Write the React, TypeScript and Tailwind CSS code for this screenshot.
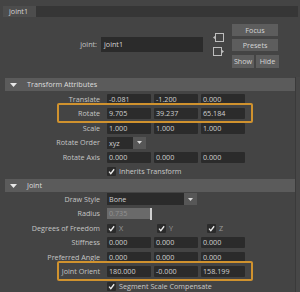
import React from "react";

function Field({ v, w = "w-[44px]" }: { v: string; w?: string }) {
  return (
    <div className={`${w} h-[11px] bg-[#2b2b2b] pl-[2px] leading-[11px] text-[#cfcfcf] rounded-[1px]`}>{v}</div>
  );
}

function Check({ label, dim }: { label?: string; dim?: boolean }) {
  return (
    <div className="flex items-center gap-[3px]">
      <div className="w-[9px] h-[9px] bg-[#2b2b2b] flex items-center justify-center rounded-[1px]">
        <svg width="7" height="7" viewBox="0 0 10 10">
          <path d="M1.5 5.2 L4 8 L8.8 1.8" stroke="#ececec" strokeWidth="1.9" fill="none" />
        </svg>
      </div>
      {label && <span className={dim ? "text-[#9a9a9a]" : "text-[#c8c8c8]"}>{label}</span>}
    </div>
  );
}

function Row({ label, children, highlight }: { label?: string; children?: React.ReactNode; highlight?: boolean }) {
  return (
    <div className="relative flex h-[14.5px] items-center">
      <div className="w-[95px] text-right text-[#c4c4c4] leading-[11px]">{label}</div>
      <div className="ml-[7px] flex items-center gap-[3px]">{children}</div>
      {highlight && (
        <div className="absolute left-[52px] w-[196px] top-[-3.5px] h-[20px] border-2 border-[#d0922e] rounded-[2px]" />
      )}
    </div>
  );
}

function Header({ title }: { title: string }) {
  return (
    <div className="flex h-[13px] items-center bg-[#5b5b5b] text-[#dedede]">
      <svg width="7" height="4" viewBox="0 0 7 4" className="ml-[5px]">
        <path d="M0 0 H7 L3.5 4 Z" fill="#e8e8e8" />
      </svg>
      <span className="ml-[10px] leading-[11px]">{title}</span>
    </div>
  );
}

function Dropdown({ v, w }: { v: string; w: string }) {
  return (
    <div className={`${w} h-[12px] flex`}>
      <div className="flex-1 bg-[#2b2b2b] pl-[2px] leading-[12px] text-[#cfcfcf]">{v}</div>
      <div className="w-[13px] bg-[#575757] flex items-center justify-center">
        <svg width="5" height="3" viewBox="0 0 5 3">
          <path d="M0 0 H5 L2.5 3 Z" fill="#d8d8d8" />
        </svg>
      </div>
    </div>
  );
}

function Btn({ t, w, h }: { t: string; w: string; h: string }) {
  return (
    <div className={`${w} ${h} bg-[#5d5d5d] text-[#d6d6d6] flex items-center justify-center`}>{t}</div>
  );
}

export default function App() {
  return (
    <div className="w-[300px] h-[292px] bg-[#444444] overflow-hidden font-['Open_Sans',sans-serif] text-[7.2px]">
      {/* tab bar */}
      <div className="pt-[6px] pl-[3px] pr-[2px]">
        <div className="flex h-[11px] bg-[#363636]">
          <div className="w-[33px] bg-[#4d4d4d] pl-[6px] leading-[11px] text-[#d4d4d4]">joint1</div>
        </div>
      </div>
      {/* node header */}
      <div className="flex h-[60px]">
        <div className="flex items-center mt-[20px] h-[15px] self-start">
          <div className="w-[97px] text-right text-[#c4c4c4]">joint:</div>
          <div className="ml-[4px] w-[102px] h-[15px] bg-[#2b2b2b] pl-[3px] leading-[15px] text-[#d4d4d4]">joint1</div>
        </div>
        <div className="ml-[10px] mt-[16px] flex flex-col gap-[5px] self-start">
          <svg width="11" height="9" viewBox="0 0 11 9">
            <rect x="2.5" y="0.5" width="8" height="8" fill="none" stroke="#bdbdbd" strokeWidth="1" />
            <path d="M0 4.5 L2.5 2.5 V6.5 Z" fill="#bdbdbd" />
          </svg>
          <svg width="11" height="9" viewBox="0 0 11 9">
            <rect x="0.5" y="0.5" width="8" height="8" fill="none" stroke="#bdbdbd" strokeWidth="1" />
            <path d="M11 4.5 L8.5 2.5 V6.5 Z" fill="#bdbdbd" />
          </svg>
        </div>
        <div className="ml-[8px] mt-[7px] flex flex-col gap-[3px] self-start">
          <Btn t="Focus" w="w-[46px]" h="h-[12px]" />
          <Btn t="Presets" w="w-[46px]" h="h-[12px]" />
          <div className="flex gap-[2px] mt-[1px]">
            <Btn t="Show" w="w-[22px]" h="h-[13px]" />
            <Btn t="Hide" w="w-[23px]" h="h-[13px]" />
          </div>
        </div>
      </div>
      {/* attribute area */}
      <div className="flex">
        <div className="ml-[5px] w-[290px] pt-[1px]">
          <Header title="Transform Attributes" />
          <div className="h-[1px]" />
          <Row label="Translate">
            <Field v="-0.081" />
            <Field v="-1.200" />
            <Field v="0.000" />
          </Row>
          <Row label="Rotate" highlight>
            <Field v="9.705" />
            <Field v="39.237" />
            <Field v="65.184" />
          </Row>
          <Row label="Scale">
            <Field v="1.000" />
            <Field v="1.000" />
            <Field v="1.000" />
          </Row>
          <Row label="Rotate Order">
            <Dropdown v="xyz" w="w-[39px]" />
          </Row>
          <Row label="Rotate Axis">
            <Field v="0.000" />
            <Field v="0.000" />
            <Field v="0.000" />
          </Row>
          <Row>
            <Check label="Inherits Transform" />
          </Row>
          <Header title="Joint" />
          <Row label="Draw Style">
            <Dropdown v="Bone" w="w-[90px]" />
          </Row>
          <Row label="Radius">
            <div className="w-[43px] h-[11px] bg-[#6a6a6a] pl-[2px] leading-[11px] text-[#929292]">0.735</div>
            <div className="-ml-[3px] w-[2px] h-[12px] bg-[#cfcfcf]" />
          </Row>
          <Row label="Degrees of Freedom">
            <div className="w-[47px]"><Check label="X" dim /></div>
            <div className="w-[47px]"><Check label="Y" dim /></div>
            <Check label="Z" dim />
          </Row>
          <Row label="Stiffness">
            <Field v="0.000" />
            <Field v="0.000" />
            <Field v="0.000" />
          </Row>
          <Row label="Preferred Angle">
            <Field v="0.000" />
            <Field v="0.000" />
            <Field v="0.000" />
          </Row>
          <Row label="Joint Orient" highlight>
            <Field v="180.000" />
            <Field v="-0.000" />
            <Field v="158.199" />
          </Row>
          <Row>
            <Check label="Segment Scale Compensate" />
          </Row>
        </div>
        <div className="w-[5px] h-[300px] border-l border-[#3a3a3a] bg-[#474747]" />
      </div>
    </div>
  );
}
